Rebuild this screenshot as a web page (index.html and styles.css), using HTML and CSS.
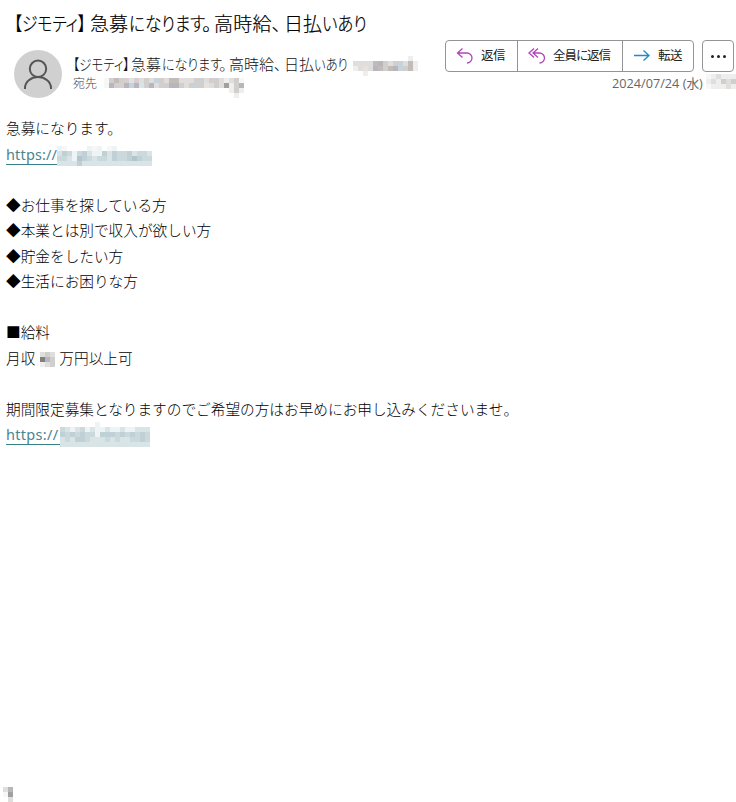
FILE: index.html
```html
<!DOCTYPE html>
<html lang="ja">
<head>
  <meta charset="UTF-8">
  <title>【ジモティ】急募になります。高時給、日払いあり</title>
  <link rel="stylesheet" href="styles.css">
</head>
<body>
  <header class="mail-header">
    <h1 class="subject"><span class="seg s1">【ジモティ】</span><span class="seg s2">急募</span><span class="seg s3">になります</span><span class="seg maru">。</span><span class="seg s4">高時給、</span><span class="seg s5">日払</span><span class="seg s6">いあり</span></h1>
    <div class="meta">
      <svg class="avatar" viewBox="0 0 48 48">
        <circle cx="24" cy="24" r="24" fill="#d0d0d0"/>
        <circle cx="24" cy="18.8" r="8.2"/>
        <path d="M11 39v-1a13 11 0 0 1 26 0v1"/>
      </svg>
      <div class="people">
        <div class="sender"><span class="seg s1">【ジモティ】</span><span class="seg s2">急募</span><span class="seg s3">になります</span><span class="seg maru">。</span><span class="seg s4">高時給、</span><span class="seg s5">日払</span><span class="seg s6">いあり</span><span class="mosaic m-sender" data-name="sender"></span></div>
        <div class="to">宛先<span class="mosaic m-to" data-name="to"></span></div>
      </div>
      <div class="side">
        <div class="actions">
          <div class="group">
            <button class="btn reply"><svg viewBox="0 0 18 18" class="purple"><path d="M6.500 1.500 1.500 6l5 4.500M1.500 6H11a5 5 0 0 1 0 10"/></svg><span>返信</span></button>
            <button class="btn reply-all"><svg viewBox="0 0 18 18" class="purple"><path d="M6 1.500 1 6l5 4.500M10 1.500 5 6l5 4.500M5 6h6.500a5 5 0 0 1 0 10"/></svg><span>全員に返信</span></button>
            <button class="btn forward"><svg viewBox="0 0 18 18" class="blue"><path d="M1 8.500h15M10.500 3.500l5.500 5-5.500 5"/></svg><span>転送</span></button>
          </div>
          <button class="more"><i></i><i></i><i></i></button>
        </div>
        <div class="date"><span>2024/07/24 (水)</span><span class="mosaic m-time" data-name="time"></span></div>
      </div>
    </div>
  </header>

  <main class="mail-body">
    <p>急募になります。</p>
    <p><a class="link l1">https://</a><span class="mosaic m-link" data-name="link1"></span></p>
    <p></p>
    <p>◆お仕事を探している方</p>
    <p>◆本業とは別で収入が欲しい方</p>
    <p>◆貯金をしたい方</p>
    <p>◆生活にお困りな方</p>
    <p></p>
    <p>■給料</p>
    <p>月収<span class="mosaic m-pay" data-name="pay"></span>万円以上可</p>
    <p></p>
    <p>期間限定募集となりますのでご希望の方はお早めにお申し込みくださいませ。</p>
    <p><a class="link l2">https://</a><span class="mosaic m-link2" data-name="link2"></span></p>
  </main>

  <footer class="mail-footer"><span class="mosaic" data-name="foot"></span></footer>
  <script src="script.js"></script>
</body>
</html>
```
FILE: styles.css
```css
* { box-sizing: border-box; }

body {
  margin: 0;
  height: 802px;
  display: flex;
  flex-direction: column;
  background: #fff;
  color: #000;
  font-family: "Noto Sans CJK JP", sans-serif;
  font-weight: 300;
  overflow: hidden;
}

.subject {
  margin: 0;
  padding: 9px 0 0 14px;
  height: 40px;
  display: flex;
  font-size: 19px;
  font-weight: 300;
  line-height: 28px;
  -webkit-text-stroke: 0.2px #000;
}

/* narrow kana, each run has its own width */
.seg {
  display: block;
  flex: none;
  white-space: nowrap;
  font-feature-settings: "palt";
  transform-origin: 0 50%;
}
.s1 { transform: scaleX(0.83); }
.s3 { transform: scaleX(0.87); }
.s6 { transform: scaleX(0.86); }
.subject .s1 { width: 76px; }
.subject .s2 { width: 39px; }
.subject .s3 { width: 73px; }
.subject .maru { width: 12px; }
.subject .s4 { width: 70px; letter-spacing: 0.2px; }
.subject .s5 { width: 38px; }
.subject .s6 { width: 46px; }

.meta {
  display: flex;
  height: 58px;
  padding-left: 14px;
}

.avatar {
  width: 48px;
  height: 48px;
  margin-top: 10px;
  flex: none;
}
.avatar circle + circle,
.avatar path {
  fill: none;
  stroke: #555;
  stroke-width: 2;
}

.people {
  width: 383px;
  padding: 14px 0 0 11px;
  flex: none;
}

.sender {
  display: flex;
  height: 21px;
  font-size: 15px;
  line-height: 20px;
  color: #111;
}
.sender .s1 { width: 58px; }
.sender .s2 { width: 31px; }
.sender .s3 { width: 57px; }
.sender .maru { width: 10px; }
.sender .s4 { width: 55px; }
.sender .s5 { width: 30px; }
.sender .s6 { width: 39px; transform: scaleX(0.82); }

.to {
  display: flex;
  height: 18px;
  font-size: 12px;
  line-height: 15px;
  color: #444;
}

.side { flex: 1; }

.actions {
  display: flex;
  gap: 8px;
}

.group {
  display: flex;
  width: 249px;
  height: 32px;
  border: 1px solid #949494;
  border-radius: 4px;
}

.btn, .more {
  margin: 0;
  padding: 0;
  border: 0;
  background: #fff;
  font: 400 12.5px "Noto Sans CJK JP", sans-serif;
  color: #222;
}
.btn {
  display: flex;
  align-items: center;
  background: none;
  padding-left: 10px;
  white-space: nowrap;
}
.btn + .btn { border-left: 1px solid #949494; }
.btn svg {
  width: 18px;
  height: 18px;
  fill: none;
  stroke-width: 1.3;
}
.btn span {
  margin: -3px 0 0 7px;
  font-feature-settings: "palt";
  letter-spacing: -0.4px;
}
.reply-all span { letter-spacing: -1px; }
.purple { stroke: #b146b9; }
.blue { stroke: #2288ca; }
.reply { width: 71px; }
.reply-all { width: 105px; }
.forward { width: 71px; }

.more {
  display: flex;
  justify-content: center;
  align-items: center;
  gap: 3px;
  width: 32px;
  height: 32px;
  border: 1px solid #949494;
  border-radius: 4px;
}
.more i {
  width: 3px;
  height: 3px;
  border-radius: 50%;
  background: #222;
}

.date {
  display: flex;
  padding-left: 167px;
  font-family: "Open Sans", "Noto Sans CJK JP", sans-serif;
  font-size: 12.7px;
  font-weight: 400;
  line-height: 22px;
  color: #666;
  white-space: nowrap;
}
.date > span:first-child { width: 94px; flex: none; }

.mail-body {
  padding: 17px 0 0 6px;
  flex: 1;
  font-size: 14.67px;
  line-height: 25.55px;
}
.mail-body p {
  display: flex;
  margin: 0;
  height: 25.55px;
}

.link {
  height: 24px;
  border-bottom: 1px solid #38808c;
  color: #4c858f;
  font-family: "Noto Sans", sans-serif;
  font-size: 14.5px;
  font-weight: 400;
  line-height: 27px;
  letter-spacing: 0.15px;
}
.l1 { width: 51px; }
.l2 { width: 54px; height: 23px; line-height: 25px; letter-spacing: 0.3px; }

.mosaic { flex: none; line-height: 0; }
.mosaic svg { display: block; }
.m-sender { margin-top: 2px; }
.m-to { margin: 3px 0 0 7px; }
.m-time { margin-top: 2px; }
.m-link { margin-top: 5px; }
.m-link2 { margin-top: 0; }
.m-pay { margin: 7px 4px 0 5px; }

.mail-footer {
  height: 15px;
  padding-left: 3px;
}
```
FILE: script.js
```js
// masked parts, 5px cells: one letter per cell, "." is empty
const colors = {
  a: '#f7f7f7', b: '#eeeeee', c: '#e0dedd', d: '#d0cfce', e: '#c3bbb7', f: '#b7b5bd',
  g: '#a0a0a0', h: '#808080', p: '#d9cdd0', q: '#c8d2da', r: '#e9e1db',
  t: '#eef4f5', u: '#d9e4e6', v: '#cbd9dd', w: '#bfd1d6', x: '#b0c6cc'
};

const masks = {
  sender: ['...........b.', 'ccccefdcdqceb', 'bcrcfedefqdeb', '..b..........'],
  to: ['adedpupcdcqdceecccddcddcbcda', 'afdpfqfudfcddffdcdqdrcdcgbdf', '.........................bdb', '..........................b.'],
  time: ['abcbbb', 'bcbdcd', 'abbbcb'],
  link1: ['ta....tat.at.......', 'uwvtvwuttwuwvvwuvvu', 'vvutxwvuvvuwvvwxwvv', 'uuuuwuuuuuuuuuuuuuu'],
  link2: ['.......t..........', 'vutuvtuttuttuttuuu', 'wvwvwvvtwwwvwvwvwv', 'uvuwwvuuuvuvuuvvwv', 'uuuuuuuuuuuuuuuuuu'],
  pay: ['cdc', 'hfd', 'bcd'],
  foot: ['cf', 'ag', '.c']
};

document.querySelectorAll('.mosaic').forEach(el => {
  const rows = masks[el.dataset.name];
  const w = rows[0].length * 5;
  const h = rows.length * 5;
  let cells = '';
  rows.forEach((row, y) => {
    [...row].forEach((c, x) => {
      if (colors[c]) cells += `<rect x="${x * 5}" y="${y * 5}" width="5" height="5" fill="${colors[c]}"/>`;
    });
  });
  el.innerHTML = `<svg width="${w}" height="${h}" shape-rendering="crispEdges">${cells}</svg>`;
});
```
